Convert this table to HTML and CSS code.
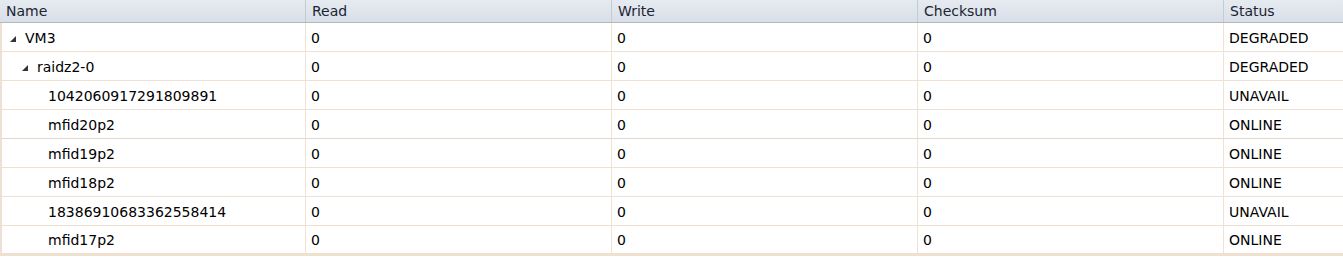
FILE: index.html
```html
<!DOCTYPE html>
<html>
<head>
<meta charset="utf-8">
<link rel="stylesheet" href="styles.css">
</head>
<body>
<div class="grid">
  <div class="head">
    <div class="hc">Name</div>
    <div class="hc">Read</div>
    <div class="hc">Write</div>
    <div class="hc">Checksum</div>
    <div class="hc last">Status</div>
  </div>
  <div class="body">
    <div class="row">
      <div class="c name l1"><svg class="arrow" width="6" height="6" viewBox="0 0 6 6"><polygon points="6,0 6,6 0,6" fill="#333"/></svg>VM3</div>
      <div class="c">0</div><div class="c">0</div><div class="c">0</div><div class="c last">DEGRADED</div>
    </div>
    <div class="row">
      <div class="c name l2"><svg class="arrow" width="6" height="6" viewBox="0 0 6 6"><polygon points="6,0 6,6 0,6" fill="#333"/></svg>raidz2-0</div>
      <div class="c">0</div><div class="c">0</div><div class="c">0</div><div class="c last">DEGRADED</div>
    </div>
    <div class="row">
      <div class="c name l3">1042060917291809891</div>
      <div class="c">0</div><div class="c">0</div><div class="c">0</div><div class="c last">UNAVAIL</div>
    </div>
    <div class="row sep">
      <div class="c name l3">mfid20p2</div>
      <div class="c">0</div><div class="c">0</div><div class="c">0</div><div class="c last">ONLINE</div>
    </div>
    <div class="row">
      <div class="c name l3">mfid19p2</div>
      <div class="c">0</div><div class="c">0</div><div class="c">0</div><div class="c last">ONLINE</div>
    </div>
    <div class="row">
      <div class="c name l3">mfid18p2</div>
      <div class="c">0</div><div class="c">0</div><div class="c">0</div><div class="c last">ONLINE</div>
    </div>
    <div class="row">
      <div class="c name l3">18386910683362558414</div>
      <div class="c">0</div><div class="c">0</div><div class="c">0</div><div class="c last">UNAVAIL</div>
    </div>
    <div class="row final">
      <div class="c name l3">mfid17p2</div>
      <div class="c">0</div><div class="c">0</div><div class="c">0</div><div class="c last">ONLINE</div>
    </div>
  </div>
</div>
</body>
</html>
```

FILE: styles.css
```css
html, body {
  margin: 0;
  padding: 0;
  background: #fff;
}
.grid {
  width: 1343px;
  font-family: "DejaVu Sans", Verdana, sans-serif;
  font-size: 14px;
  color: #000;
}
.head {
  display: grid;
  grid-template-columns: 306px 306px 306px 306px 1fr;
  height: 22px;
  background: linear-gradient(#e6ebf1, #d8dfe8);
  border-bottom: 1px solid #b4b8bd;
}
.hc {
  border-right: 1px solid #c6cbd1;
  padding-left: 6px;
  line-height: 22px;
  color: #1b2430;
}
.hc.last { border-right: none; }
.body {
  border-left: 2px solid #eee0d2;
}
.row {
  display: grid;
  grid-template-columns: 304px 306px 306px 306px 1fr;
  height: 28px;
  border-bottom: 1px solid #eee1d4;
}
.row.sep { border-bottom-color: #e4d7ca; }
.row.final {
  height: 27px;
  border-bottom: 3px solid #efe0d0;
}
.c {
  display: flex;
  align-items: center;
  padding-left: 5px;
  padding-top: 1px;
  border-right: 1px solid #f2e2d4;
  white-space: nowrap;
}
.c.last { border-right: none; }
.name.l1 { padding-left: 8px; }
.name.l2 { padding-left: 20px; }
.name.l3 { padding-left: 46px; }
.arrow {
  margin-right: 9px;
  margin-top: 2px;
  flex: none;
}
```
